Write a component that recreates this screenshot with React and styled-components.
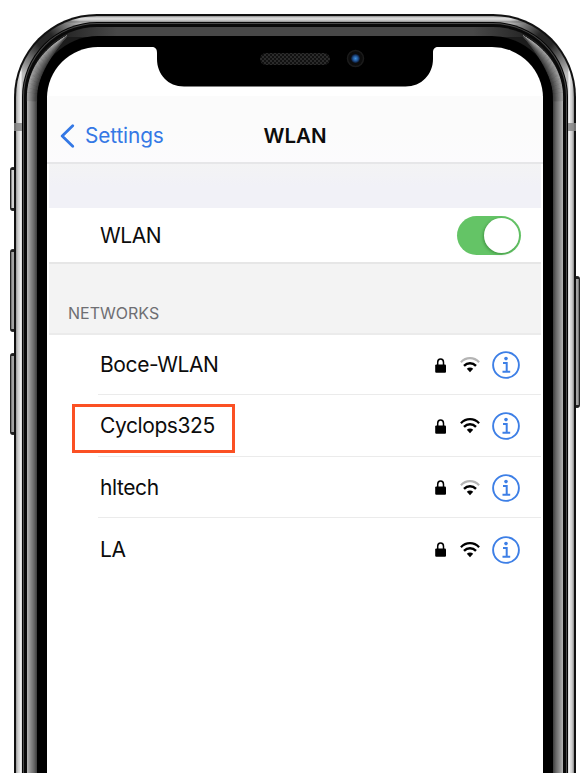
import React from "react";
import styled, { createGlobalStyle } from "styled-components";

const GlobalStyle = createGlobalStyle`
  * { box-sizing: border-box; }
  html, body, #root { height: 773px; }
  body {
    margin: 0;
    overflow: hidden;
    background: #fff;
    font-family: Inter, "Liberation Sans", sans-serif;
    color: #0c0c0c;
  }
`;

const Page = styled.main`
  width: 587px;
  height: 773px;
  padding: 14px 11px 0 14px;
  position: relative;
  overflow: hidden;
`;

/* Phone body: concentric rings from the steel band to the black bezel */
const SteelEdge = styled.div`
  position: relative;
  width: 562px;
  height: 860px;
  padding: 2px;
  border-radius: 83px;
  background: #111;
`;

const SteelBand = styled.div`
  position: relative;
  height: 100%;
  padding: 6px;
  border-radius: 81px;
  background:
    radial-gradient(circle 40px at 29px 24px, #262626 20%, transparent 100%),
    radial-gradient(circle 40px at 529px 24px, #262626 20%, transparent 100%),
    linear-gradient(#8a8a8a 0, #ddd 2px, #d0d0d0 4px, #8d8d8d 6px, transparent 7px),
    linear-gradient(90deg, #999 0, #ccc 2px, #e0e0e0 4px, #fff 5px, #bbb 6px, #bbb 552px, #fff 553px, #e0e0e0 554px, #ccc 556px, #888 558px);
`;

const Gasket = styled.div`
  height: 100%;
  padding: 1px;
  border-radius: 75px;
  background: #050505;
`;

const GasketLine = styled.div`
  height: 100%;
  padding: 1px;
  border-radius: 74px;
  background: #4a4a4a;
`;

const GasketInner = styled.div`
  height: 100%;
  padding: 3px;
  border-radius: 73px;
  background: #090909;
`;

const Glass = styled.div`
  height: 100%;
  padding: 9px 10px;
  border-radius: 70px;
  background:
    linear-gradient(90deg, #1a1a1a 20px, #484848 90px, #484848 446px, #1a1a1a 516px) 0 0 / 100% 10px no-repeat,
    linear-gradient(#1c1c1c, #1c1c1c) 0 0 / 100% 74px no-repeat,
    linear-gradient(90deg, #b5b5b5 0, #929292 3px, #686868 7px, #3d3d3d 10px, #3d3d3d 526px, #686868 529px, #929292 533px, #b5b5b5 536px);
`;

const Bezel = styled.div`
  height: 100%;
  padding: 11px 10px 0;
  border-radius: 61px;
  background: #000;
`;

const Screen = styled.div`
  position: relative;
  height: 100%;
  padding-top: 49px;
  overflow: hidden;
  border-radius: 51px 51px 0 0;
  background: #fff;
`;

const Glints = styled.svg`
  position: absolute;
  left: 0;
  top: 0;
  pointer-events: none;
`;

const NotchArt = styled.svg`
  position: absolute;
  left: 150px;
  top: 46px;
`;

const SideButton = styled.div`
  position: absolute;
  left: ${(p) => p.$left}px;
  top: ${(p) => p.$top}px;
  width: 6px;
  height: ${(p) => p.$height}px;
  border: 1px solid #222;
  border-width: 3px 1px;
  border-radius: 3px;
  background: linear-gradient(${(p) => (p.$flip ? "270deg" : "90deg")}, #666, ${(p) => p.$shine || "#b5b5b5"} 50%, #777);
`;

const AntennaMark = styled.i`
  position: absolute;
  top: 123px;
  left: ${(p) => p.$left}px;
  width: 8px;
  height: 8px;
  background: #858585;
  opacity: 0.85;
`;

const NavBar = styled.header`
  display: grid;
  grid-template-columns: 1fr auto 1fr;
  align-items: center;
  height: 68px;
  padding: 13px 13px 0;
  background: linear-gradient(#fbfbfb 55%, #fcfbfd);
  border-bottom: 2px solid #e6e6e8;
`;

const BackLink = styled.a`
  display: flex;
  align-items: center;
  gap: 10px;
  color: #3478e5;
  font-size: 20.8px;
  line-height: 28px;
  letter-spacing: -0.12px;
`;

const Title = styled.h1`
  margin: 0;
  font-size: 20.5px;
  line-height: 28px;
  font-weight: 600;
  letter-spacing: 0;
`;

const Content = styled.div`
  margin: 0 2px;
`;

const Spacer = styled.div`
  height: 44px;
  background: linear-gradient(#f3f3f4, #f1f1f7 50%);
`;

const ToggleRow = styled.div`
  display: flex;
  align-items: center;
  justify-content: space-between;
  height: 54px;
  padding: 1px 20px 0 51px;
`;

const Label = styled.span`
  font-size: 21px;
  line-height: 28px;
  letter-spacing: -0.4px;
`;

const Switch = styled.div`
  display: flex;
  justify-content: flex-end;
  width: 64px;
  height: 39px;
  padding: 2px;
  border-radius: 20px;
  background: #64c466;
`;

const Knob = styled.div`
  width: 35px;
  height: 35px;
  border-radius: 50%;
  background: #fff;
  box-shadow: -1px 1px 3px rgba(0, 60, 0, 0.35);
`;

const SectionHeader = styled.h2`
  height: 73px;
  margin: 0;
  padding: 39px 19px 0;
  border-top: 2px solid #e6e6e6;
  border-bottom: 2px solid #ebebeb;
  background: #f3f3f3;
  color: #6e6e72;
  font-size: 16px;
  font-weight: 400;
  line-height: 20px;
  letter-spacing: 0;
`;

const NetworkList = styled.div`
  margin-top: -1px;
`;

const NetworkRow = styled.div`
  display: flex;
  align-items: center;
  height: 61.3px;
  margin-left: 49px;
  padding: 2px 21px 0 2px;
  border-bottom: ${(p) => (p.$last ? "0" : "1.5px solid #ebebeb")};
`;

const NetworkName = styled.div`
  position: relative;
  flex: 1;
`;

const Highlight = styled.div`
  position: absolute;
  left: -28px;
  top: -8px;
  width: 163px;
  height: 49px;
  border: 3px solid #fb5023;
`;

const Status = styled.div`
  display: flex;
  align-items: center;
  gap: 12px;
`;

const Chevron = () => (
  <svg width="15" height="24" viewBox="0 0 15 24" fill="none">
    <path d="M12.7 1.8 2.2 12l10.5 10.2" stroke="#3478e5" strokeWidth="2.8" strokeLinecap="round" strokeLinejoin="round" />
  </svg>
);

const LockIcon = () => (
  <svg width="13" height="15" viewBox="0 0 13 15">
    <path d="M2.7 7V4.3a2.9 3.4 0 0 1 5.8 0V7" fill="none" stroke="#000" strokeWidth="1.5" />
    <rect x="0.2" y="6.4" width="10.8" height="8.4" rx="1.1" />
  </svg>
);

const WifiIcon = ({ weak }) => (
  <svg width="20" height="16" viewBox="0 0 20 16" fill="none">
    <path d="M.9 5.2C6-.2 14-.2 19.1 5.2" stroke={weak ? "#b4b4b4" : "#000"} strokeWidth="2.2" />
    <path d="M4 8.8c3.400-3.400 8.600-3.400 12 0" stroke="#000" strokeWidth="2.4" />
    <path d="M6.800 11.800c1.900-1.700 4.500-1.700 6.400 0L10 15.200Z" fill="#000" />
  </svg>
);

const InfoIcon = () => (
  <svg width="28" height="28" viewBox="0 0 28 28" fill="none" stroke="#3d7fe6">
    <circle cx="14" cy="14" r="12.9" strokeWidth="1.9" />
    <circle cx="14" cy="7.6" r="1.8" fill="#3d7fe6" stroke="none" />
    <path d="M11 12h3.700v8.600M10.500 20.700h7.700" strokeWidth="2" />
  </svg>
);

const STEPS = Array.from({ length: 21 }, (_, i) => i / 20);
const lerp = (a, b, t) => a + (b - a) * t;

/* Reflection that narrows from the side of the glass into the corner */
const CornerGlint = () => (
  <g fill="none">
    {STEPS.map((t) => {
      const grey = Math.round(lerp(178, 66, t));
      const x = lerp(27.4, 36.6, t);
      return (
        <path
          key={t}
          d={`M${x} 101.500V97C${x} ${lerp(72, 80, t)} ${lerp(42, 47, t)} ${lerp(49, 60, t)} 67 36`}
          stroke={`rgb(${grey},${grey},${grey})`}
          strokeWidth="0.8"
        />
      );
    })}
  </g>
);

const Notch = () => (
  <NotchArt width="290" height="42" viewBox="150 46 290 42">
    <defs>
      <pattern id="mesh" width="4" height="4" patternUnits="userSpaceOnUse">
        <rect width="4" height="4" fill="#2b2b2b" />
        <rect width="2" height="2" fill="#111" />
        <rect x="2" y="2" width="2" height="2" fill="#111" />
      </pattern>
      <radialGradient id="lens">
        <stop offset="0" stopColor="#3f8fdd" />
        <stop offset=".5" stopColor="#245a9c" />
        <stop offset="1" stopColor="#0b1730" />
      </radialGradient>
    </defs>
    <path d="M151 46.5C155.5 47 157 49 157 53v6c0 15.5 11 27.5 27 27.5h221.500c16 0 27.500-12 27.500-27.500v-6c0-4 1.500-6 6-6.500Z" fill="#000" />
    <rect x="260" y="53" width="70" height="12" rx="6" fill="url(#mesh)" />
    <circle cx="355.500" cy="58.500" r="8" fill="#0c0c0c" stroke="#1b1b1b" strokeWidth="1.500" />
    <circle cx="355.500" cy="58.500" r="4.500" fill="url(#lens)" />
  </NotchArt>
);

const NETWORKS = [
  { name: "Boce-WLAN", weak: true },
  { name: "Cyclops325", highlighted: true },
  { name: "hltech", weak: true },
  { name: "LA" },
];

export default function App() {
  return (
    <>
      <GlobalStyle />
      <Page>
        <SideButton $left={10} $top={167} $height={44} $shine="#f2f2f2" />
        <SideButton $left={10} $top={249} $height={83} />
        <SideButton $left={10} $top={353} $height={82} />
        <SideButton $left={573.5} $top={276} $height={132} $flip />
        <SteelEdge>
          <SteelBand>
            <Gasket>
              <GasketLine>
                <GasketInner>
                  <Glass>
                    <Bezel>
                      <Screen>
                        <NavBar>
                          <BackLink>
                            <Chevron />
                            Settings
                          </BackLink>
                          <Title>WLAN</Title>
                        </NavBar>
                        <Content>
                          <Spacer />
                          <ToggleRow>
                            <Label>WLAN</Label>
                            <Switch>
                              <Knob />
                            </Switch>
                          </ToggleRow>
                          <SectionHeader>NETWORKS</SectionHeader>
                          <NetworkList>
                            {NETWORKS.map((n, i) => (
                              <NetworkRow key={n.name} $last={i === NETWORKS.length - 1}>
                                <NetworkName>
                                  <Label>{n.name}</Label>
                                  {n.highlighted && <Highlight />}
                                </NetworkName>
                                <Status>
                                  <LockIcon />
                                  <WifiIcon weak={n.weak} />
                                  <InfoIcon />
                                </Status>
                              </NetworkRow>
                            ))}
                          </NetworkList>
                        </Content>
                      </Screen>
                    </Bezel>
                  </Glass>
                </GasketInner>
              </GasketLine>
            </Gasket>
          </SteelBand>
        </SteelEdge>
        <Glints width="587" height="140" viewBox="0 0 587 140">
          <CornerGlint />
          <g transform="translate(590 0) scale(-1 1)">
            <CornerGlint />
          </g>
        </Glints>
        <Notch />
        <AntennaMark $left={14} />
        <AntennaMark $left={568} />
      </Page>
    </>
  );
}
